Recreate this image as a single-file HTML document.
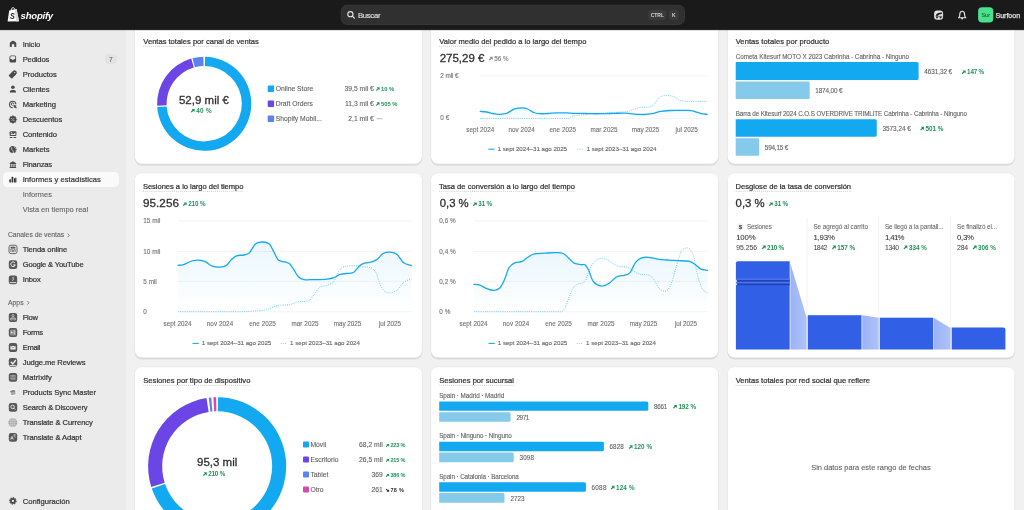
<!DOCTYPE html>
<html><head><meta charset="utf-8"><style>
html,body{margin:0;padding:0;width:1024px;height:510px;overflow:hidden;background:#f1f1f1;font-family:'Liberation Sans', sans-serif;}
#wrap{position:absolute;left:0;top:0;width:1024px;height:510px;will-change:transform;overflow:hidden;}
.r{position:absolute;}
.t{position:absolute;line-height:1;white-space:nowrap;}
svg{position:absolute;left:0;top:0;}
</style></head><body>
<div id="wrap">
<div class="r" style="left:0px;top:30px;width:125.5px;height:480px;background:#ebebeb;border-radius:0px;"></div><div class="r" style="left:3.2px;top:172.1px;width:116px;height:15px;background:#fafafa;border-radius:4.5px;"></div><div class="r" style="left:105.1px;top:54.2px;width:11.5px;height:10px;background:#e3e3e3;border-radius:4px;"></div>
<svg width="1024" height="510" viewBox="0 0 1024 510">
<rect x="134.60" y="11.00" width="287.60" height="154.80" rx="7.2" fill="rgba(0,0,0,0.08)"/><rect x="134.10" y="9.20" width="288.60" height="155.40" rx="7.8" fill="rgba(0,0,0,0.03)"/><rect x="134.90" y="10.00" width="287.00" height="153.80" rx="7" fill="#fff"/><rect x="430.80" y="11.00" width="287.60" height="154.80" rx="7.2" fill="rgba(0,0,0,0.08)"/><rect x="430.30" y="9.20" width="288.60" height="155.40" rx="7.8" fill="rgba(0,0,0,0.03)"/><rect x="431.10" y="10.00" width="287.00" height="153.80" rx="7" fill="#fff"/><rect x="727.30" y="11.00" width="287.60" height="154.80" rx="7.2" fill="rgba(0,0,0,0.08)"/><rect x="726.80" y="9.20" width="288.60" height="155.40" rx="7.8" fill="rgba(0,0,0,0.03)"/><rect x="727.60" y="10.00" width="287.00" height="153.80" rx="7" fill="#fff"/><rect x="134.60" y="174.30" width="287.60" height="185.30" rx="7.2" fill="rgba(0,0,0,0.08)"/><rect x="134.10" y="172.50" width="288.60" height="185.90" rx="7.8" fill="rgba(0,0,0,0.03)"/><rect x="134.90" y="173.30" width="287.00" height="184.30" rx="7" fill="#fff"/><rect x="430.80" y="174.30" width="287.60" height="185.30" rx="7.2" fill="rgba(0,0,0,0.08)"/><rect x="430.30" y="172.50" width="288.60" height="185.90" rx="7.8" fill="rgba(0,0,0,0.03)"/><rect x="431.10" y="173.30" width="287.00" height="184.30" rx="7" fill="#fff"/><rect x="727.30" y="174.30" width="287.60" height="185.30" rx="7.2" fill="rgba(0,0,0,0.08)"/><rect x="726.80" y="172.50" width="288.60" height="185.90" rx="7.8" fill="rgba(0,0,0,0.03)"/><rect x="727.60" y="173.30" width="287.00" height="184.30" rx="7" fill="#fff"/><rect x="134.60" y="368.20" width="287.60" height="173.80" rx="7.2" fill="rgba(0,0,0,0.08)"/><rect x="134.10" y="366.40" width="288.60" height="174.40" rx="7.8" fill="rgba(0,0,0,0.03)"/><rect x="134.90" y="367.20" width="287.00" height="172.80" rx="7" fill="#fff"/><rect x="430.80" y="368.20" width="287.60" height="173.80" rx="7.2" fill="rgba(0,0,0,0.08)"/><rect x="430.30" y="366.40" width="288.60" height="174.40" rx="7.8" fill="rgba(0,0,0,0.03)"/><rect x="431.10" y="367.20" width="287.00" height="172.80" rx="7" fill="#fff"/><rect x="727.30" y="368.20" width="287.60" height="173.80" rx="7.2" fill="rgba(0,0,0,0.08)"/><rect x="726.80" y="366.40" width="288.60" height="174.40" rx="7.8" fill="rgba(0,0,0,0.03)"/><rect x="727.60" y="367.20" width="287.00" height="172.80" rx="7" fill="#fff"/><rect x="0" y="28.8" width="1024" height="2.2" fill="rgba(0,0,0,0.12)"/><rect x="0" y="0" width="1024" height="29.6" fill="#1a1a1a"/><rect x="0" y="29" width="1024" height="0.7" fill="#0c0c0c"/><path d="M9.2,10.4 L16.6,9.0 L19.0,21.2 L7.6,21.6 Z" fill="#fff"/><path d="M11.2,10.2 C11.4,8.4 12.4,7.6 13.3,7.7 C14.2,7.8 14.6,8.6 14.7,9.7" stroke="#fff" stroke-width="1.0" fill="none"/><path d="M14.9,9.4 L16.6,9.0 L19.0,21.2 L15.8,21.5 Z" fill="#d8d8d8"/><rect x="341.2" y="5.2" width="343.3" height="19.3" rx="6" fill="#303030" stroke="#3d3d3d" stroke-width="0.7"/><circle cx="350.4" cy="14.2" r="2.6" stroke="#e3e3e3" stroke-width="1.1" fill="none"/><path d="M352.3,16.1 L354.4,18.2" stroke="#e3e3e3" stroke-width="1.2" stroke-linecap="round"/><rect x="648.5" y="10" width="17.7" height="10" rx="2.5" fill="#3a3a3a"/><rect x="669.1" y="10" width="9.7" height="10" rx="2.5" fill="#3a3a3a"/><rect x="934.1" y="10.5" width="9.0" height="9.2" rx="3.2" fill="#e3e3e3"/><path d="M935.6,15.6 Q937.0,12.4 942.0,12.6 L941.8,13.9 Q938.8,14.0 937.4,15.9 Z" fill="#1a1a1a"/><path d="M935.6,16.4 L942.4,16.4" stroke="#1a1a1a" stroke-width="0.6"/><ellipse cx="937.0" cy="17.6" rx="1.0" ry="0.8" fill="#1a1a1a"/><ellipse cx="940.6" cy="17.6" rx="1.0" ry="0.8" fill="#1a1a1a"/><path d="M962.2,11.3 C960.5,11.3 959.8,12.7 959.8,14.4 L959.6,16.2 L958.6,17.7 L965.8,17.7 L964.8,16.2 L964.6,14.4 C964.6,12.7 963.9,11.3 962.2,11.3 Z" stroke="#e3e3e3" stroke-width="1.1" fill="none" stroke-linejoin="round"/><circle cx="962.2" cy="18.5" r="0.95" fill="#e3e3e3"/><rect x="978.1" y="7.3" width="15.2" height="15.2" rx="4" fill="#4be08d"/><path d="M67.6,233.6 L69.4,235.4 L67.6,237.2" stroke="#616161" stroke-width="0.75" fill="none"/><path d="M27.3,301.0 L29.1,302.8 L27.3,304.6" stroke="#616161" stroke-width="0.75" fill="none"/><path d="M9.8,47.10 L9.8,43.20 Q9.8,42.60 10.3,42.20 L12.5,40.80 Q13.05,40.45 13.6,40.80 L15.8,42.20 Q16.3,42.60 16.3,43.20 L16.3,47.10 L14.3,47.10 L14.3,45.20 Q14.3,44.10 13.05,44.10 Q11.8,44.10 11.8,45.20 L11.8,47.10 Z" fill="#4a4a4a"/><rect x="9.5" y="55.40" width="6.6" height="7.0" rx="1.5" fill="#4a4a4a"/><path d="M10.4,56.30 L15.2,56.30 L15.2,59.00 L14.0,59.00 Q13.6,59.90 12.8,59.90 Q12.0,59.90 11.6,59.00 L10.4,59.00 Z" fill="#ebebeb"/><g transform="rotate(-45 13.1 74.20)"><path d="M9.0,71.90 L15.2,71.90 Q17.4,71.90 17.4,74.20 Q17.4,76.50 15.2,76.50 L9.0,76.50 Q8.8,74.20 9.0,71.90 Z" fill="#4a4a4a"/></g><circle cx="14.7" cy="72.60" r="0.65" fill="#ebebeb"/><circle cx="12.9" cy="87.30" r="1.8" fill="#4a4a4a"/><path d="M9.8,92.60 L9.8,91.90 C9.8,90.50 11.0,89.90 12.9,89.90 C14.8,89.90 16.0,90.50 16.0,91.90 L16.0,92.60 Z" fill="#4a4a4a"/><path d="M15.9,104.20 A3.2,3.2 0 1 0 12.6,107.60" stroke="#4a4a4a" stroke-width="1.1" fill="none"/><path d="M13.9,104.10 A1.3,1.3 0 1 0 12.5,105.40" stroke="#4a4a4a" stroke-width="1.0" fill="none"/><path d="M13.3,104.60 L17.0,105.90 L15.6,106.60 L16.9,107.90 L15.9,108.50 L14.8,107.30 L14.1,108.30 Z" fill="#4a4a4a"/><polygon points="12.90,115.60 14.12,116.54 15.66,116.74 15.86,118.28 16.80,119.50 15.86,120.72 15.66,122.26 14.12,122.46 12.90,123.40 11.68,122.46 10.14,122.26 9.94,120.72 9.00,119.50 9.94,118.28 10.14,116.74 11.68,116.54" fill="#4a4a4a" stroke="#4a4a4a" stroke-width="0.4" stroke-linejoin="round"/><path d="M11.7,120.80 L14.1,118.20" stroke="#ebebeb" stroke-width="0.6"/><circle cx="11.9" cy="118.60" r="0.5" fill="#ebebeb"/><circle cx="13.9" cy="120.40" r="0.5" fill="#ebebeb"/><rect x="9.6" y="131.20" width="6.8" height="4.8" rx="1.0" fill="#4a4a4a"/><path d="M10.5,134.80 L12.0,133.30 L13.3,134.30 L15.4,132.50 L15.4,135.10 L10.5,135.10 Z" fill="#ebebeb"/><rect x="10.7" y="132.10" width="1.1" height="1.0" fill="#ebebeb"/><rect x="9.6" y="137.10" width="3.0" height="0.8" rx="0.4" fill="#4a4a4a"/><rect x="13.4" y="137.10" width="3.0" height="0.8" rx="0.4" fill="#4a4a4a"/><circle cx="12.9" cy="149.50" r="3.6" fill="#4a4a4a"/><path d="M10.6,146.90 C12.6,147.90 11.0,149.30 12.6,150.30 C13.8,150.90 13.0,152.10 13.4,153.30" stroke="#ebebeb" stroke-width="0.8" fill="none"/><path d="M14.4,146.10 C14.0,147.70 15.4,148.90 16.8,148.30" stroke="#ebebeb" stroke-width="0.7" fill="none"/><path d="M15.0,150.70 L16.8,151.10" stroke="#ebebeb" stroke-width="0.6"/><path d="M9.6,163.30 L12.9,161.20 L16.2,163.30 L16.2,164.00 L9.6,164.00 Z" fill="#4a4a4a"/><rect x="10.1" y="164.40" width="1.3" height="2.4" fill="#4a4a4a"/><rect x="12.25" y="164.40" width="1.3" height="2.4" fill="#4a4a4a"/><rect x="14.4" y="164.40" width="1.3" height="2.4" fill="#4a4a4a"/><rect x="9.6" y="167.00" width="6.6" height="1.0" rx="0.3" fill="#4a4a4a"/><rect x="9.3" y="179.30" width="1.6" height="3.3" rx="0.5" fill="#303030"/><rect x="11.6" y="176.80" width="1.6" height="5.8" rx="0.5" fill="#303030"/><rect x="13.9" y="178.30" width="1.6" height="4.3" rx="0.5" fill="#303030"/><rect x="15.4" y="177.50" width="1.0" height="5.1" rx="0.4" fill="#303030"/><rect x="9.0" y="245.20" width="8.0" height="8.4" rx="2.0" fill="#e8e8e8" stroke="#5a5a5a" stroke-width="0.9"/><rect x="10.6" y="246.80" width="4.8" height="1.4" rx="0.3" fill="#5a5a5a"/><path d="M10.9,252.00 L10.9,248.90 L15.1,248.90 L15.1,252.00" stroke="#5a5a5a" stroke-width="0.8" fill="none"/><rect x="12.3" y="250.00" width="1.4" height="2.0" fill="#5a5a5a"/><rect x="8.8" y="260.20" width="8.4" height="8.8" rx="2.2" fill="#585858"/><path d="M15.0,263.00 A2.3,2.3 0 1 0 15.3,264.90 L13.2,264.90" stroke="#f2f2f2" stroke-width="1.0" fill="none"/><rect x="8.8" y="275.50" width="8.4" height="8.8" rx="2.2" fill="#585858"/><path d="M13.6,276.90 C11.8,277.90 14.4,279.10 12.4,280.70" stroke="#f2f2f2" stroke-width="0.9" fill="none"/><rect x="9.8" y="282.10" width="6.4" height="1.0" fill="#dcdcdc"/><rect x="8.8" y="313.10" width="8.4" height="8.8" rx="2.2" fill="#585858"/><circle cx="13.0" cy="315.50" r="1.0" stroke="#e8e8e8" stroke-width="0.6" fill="none"/><circle cx="11.3" cy="319.10" r="1.0" stroke="#e8e8e8" stroke-width="0.6" fill="none"/><circle cx="14.7" cy="319.10" r="1.0" stroke="#e8e8e8" stroke-width="0.6" fill="none"/><path d="M13.0,316.50 L13.0,317.70 M11.5,318.10 L14.5,318.10" stroke="#e8e8e8" stroke-width="0.6"/><rect x="8.8" y="328.10" width="8.4" height="8.8" rx="2.2" fill="#585858"/><rect x="10.0" y="329.50" width="6.0" height="6.0" rx="1.2" fill="#8c8c8c"/><path d="M10.8,331.30 L13.0,332.50 L10.8,333.70 Z" fill="#e0e0e0"/><rect x="13.8" y="330.30" width="0.8" height="4.4" fill="#e0e0e0"/><rect x="8.8" y="343.10" width="8.4" height="8.8" rx="2.2" fill="#585858"/><rect x="10.4" y="346.00" width="5.2" height="3.6" rx="0.5" fill="#f0f0f0"/><path d="M10.6,346.20 L13.0,347.90 L15.4,346.20" stroke="#585858" stroke-width="0.5" fill="none"/><rect x="8.8" y="358.00" width="8.4" height="8.8" rx="2.2" fill="#585858"/><path d="M10.8,361.80 L12.8,364.00 L15.8,360.00" stroke="#f0f0f0" stroke-width="1.3" fill="none"/><rect x="9.6" y="365.00" width="6.8" height="0.9" fill="#e8e8e8"/><rect x="8.8" y="373.00" width="8.4" height="8.8" rx="2.2" fill="#585858"/><rect x="10.3" y="375.10" width="5.4" height="4.6" rx="0.6" fill="#9a9a9a"/><rect x="10.3" y="376.80" width="5.4" height="0.6" fill="#585858"/><rect x="9.0" y="388.50" width="7.9" height="8.0" rx="2.0" fill="#f7f7f7" stroke="#dedede" stroke-width="0.4"/><g transform="rotate(-10 13 392.50)"><rect x="10.6" y="390.30" width="4.8" height="4.6" rx="0.7" fill="#a8a8a8"/><rect x="10.6" y="390.30" width="4.8" height="1.5" rx="0.5" fill="#7c7c7c"/></g><rect x="8.8" y="403.00" width="8.4" height="8.8" rx="2.2" fill="#585858"/><circle cx="12.6" cy="406.90" r="1.8" stroke="#f0f0f0" stroke-width="0.9" fill="none"/><path d="M13.9,408.20 L15.2,409.50" stroke="#f0f0f0" stroke-width="1.0"/><circle cx="12.8" cy="422.60" r="4.4" fill="#9e9e9e"/><path d="M8.4,422.60 L17.2,422.60 M12.8,418.20 L12.8,427.00 M9.0,420.40 L16.6,420.40 M9.0,424.80 L16.6,424.80" stroke="#e6e6e6" stroke-width="0.5"/><ellipse cx="12.8" cy="422.60" rx="2.1" ry="4.4" stroke="#e6e6e6" stroke-width="0.5" fill="none"/><rect x="8.8" y="433.00" width="8.4" height="8.8" rx="2.2" fill="#585858"/><path d="M10.6,439.60 L12.0,436.40 L13.4,439.60 M11.1,438.40 L12.9,438.40" stroke="#f0f0f0" stroke-width="0.7" fill="none"/><path d="M13.4,434.80 L15.8,434.80 M14.6,434.80 L14.6,435.60 M13.6,435.60 Q14.6,437.60 15.8,437.20" stroke="#f0f0f0" stroke-width="0.6" fill="none"/><polygon points="13.22,497.21 13.94,497.35 14.19,498.42 14.65,498.72 15.73,498.52 16.14,499.12 15.57,500.06 15.68,500.60 16.59,501.22 16.45,501.94 15.38,502.19 15.08,502.65 15.28,503.73 14.68,504.14 13.74,503.57 13.20,503.68 12.58,504.59 11.86,504.45 11.61,503.38 11.15,503.08 10.07,503.28 9.66,502.68 10.23,501.74 10.12,501.20 9.21,500.58 9.35,499.86 10.42,499.61 10.72,499.15 10.52,498.07 11.12,497.66 12.06,498.23 12.60,498.12" fill="#4a4a4a" stroke="#4a4a4a" stroke-width="0.3" stroke-linejoin="round"/><circle cx="12.9" cy="500.90" r="1.1" fill="#ebebeb"/><line x1="143.3" y1="46.3" x2="258.9" y2="46.3" stroke="#a6a6a6" stroke-width="0.6" stroke-dasharray="0.95 1.0"/><line x1="439.3" y1="46.3" x2="586.4" y2="46.3" stroke="#a6a6a6" stroke-width="0.6" stroke-dasharray="0.95 1.0"/><line x1="735.7" y1="46.3" x2="829.3000000000001" y2="46.3" stroke="#a6a6a6" stroke-width="0.6" stroke-dasharray="0.95 1.0"/><line x1="142.9" y1="191.3" x2="243.5" y2="191.3" stroke="#a6a6a6" stroke-width="0.6" stroke-dasharray="0.95 1.0"/><line x1="438.9" y1="191.3" x2="575.0" y2="191.3" stroke="#a6a6a6" stroke-width="0.6" stroke-dasharray="0.95 1.0"/><line x1="735.6" y1="191.3" x2="851.1" y2="191.3" stroke="#a6a6a6" stroke-width="0.6" stroke-dasharray="0.95 1.0"/><line x1="143.3" y1="385.3" x2="250.4" y2="385.3" stroke="#a6a6a6" stroke-width="0.6" stroke-dasharray="0.95 1.0"/><line x1="439.3" y1="385.3" x2="514.0" y2="385.3" stroke="#a6a6a6" stroke-width="0.6" stroke-dasharray="0.95 1.0"/><line x1="735.7" y1="385.3" x2="870.0" y2="385.3" stroke="#a6a6a6" stroke-width="0.6" stroke-dasharray="0.95 1.0"/><defs><linearGradient id="cg" x1="0" x2="1" y1="0" y2="0"><stop offset="0" stop-color="#9bb2f6"/><stop offset="1" stop-color="#afc2f8"/></linearGradient><linearGradient id="ga" x1="0" x2="0" y1="0" y2="1"><stop offset="0" stop-color="#13a9f1" stop-opacity="0.09"/><stop offset="1" stop-color="#13a9f1" stop-opacity="0.0"/></linearGradient></defs><path d="M205.02,56.66 A47.1,47.1 0 1 1 157.21,107.04 L166.64,106.38 A37.65,37.65 0 1 0 204.86,66.11 Z" fill="#13a9f1"/><path d="M157.14,105.72 A47.1,47.1 0 0 1 191.22,58.47 L193.82,67.56 A37.65,37.65 0 0 0 166.58,105.33 Z" fill="#6b45e6"/><path d="M192.49,58.13 A47.1,47.1 0 0 1 203.38,56.66 L203.54,66.11 A37.65,37.65 0 0 0 194.84,67.28 Z" fill="#5a83f0"/><path d="M191.60,108.90 L194.70,108.90 L194.70,112.00 Z" fill="#1f9157"/><path d="M191.60,111.80 L193.30,110.30" stroke="#1f9157" stroke-width="1.20" stroke-linecap="round"/><rect x="267.7" y="85.5" width="6.4" height="6.4" rx="1" fill="#13a9f1"/><path d="M376.57,87.35 L379.47,87.35 L379.47,90.25 Z" fill="#1f9157"/><path d="M376.57,90.06 L378.16,88.66" stroke="#1f9157" stroke-width="1.12" stroke-linecap="round"/><rect x="267.7" y="100.5" width="6.4" height="6.4" rx="1" fill="#6b45e6"/><path d="M376.57,102.35 L379.47,102.35 L379.47,105.25 Z" fill="#1f9157"/><path d="M376.57,105.06 L378.16,103.66" stroke="#1f9157" stroke-width="1.12" stroke-linecap="round"/><rect x="267.7" y="115.5" width="6.4" height="6.4" rx="1" fill="#5a83f0"/><line x1="376.6" y1="118.7" x2="382.6" y2="118.7" stroke="#8a8a8a" stroke-width="0.6"/><path d="M489.60,56.80 L492.70,56.80 L492.70,59.90 Z" fill="#8a8a8a"/><path d="M489.60,59.70 L491.30,58.20" stroke="#8a8a8a" stroke-width="1.20" stroke-linecap="round"/><line x1="480.3" y1="75.8" x2="707.3" y2="75.8" stroke="#ebebeb" stroke-width="0.6"/><line x1="480.3" y1="118.6" x2="707.3" y2="118.6" stroke="#ebebeb" stroke-width="0.6"/><path d="M480.30,111.40 C481.37,111.50 484.65,111.65 486.70,112.00 C488.75,112.35 490.65,113.12 492.60,113.50 C494.55,113.88 496.25,114.27 498.40,114.30 C500.55,114.33 503.53,114.18 505.50,113.70 C507.47,113.22 508.65,112.22 510.20,111.40 C511.75,110.58 512.85,109.38 514.80,108.80 C516.75,108.22 519.75,107.87 521.90,107.90 C524.05,107.93 525.75,108.23 527.70,109.00 C529.65,109.77 531.63,111.72 533.60,112.50 C535.57,113.28 537.15,113.53 539.50,113.70 C541.85,113.87 544.78,113.63 547.70,113.50 C550.62,113.37 553.88,113.00 557.00,112.90 C560.12,112.80 563.47,112.82 566.40,112.90 C569.33,112.98 571.28,113.30 574.60,113.40 C577.92,113.50 583.73,113.45 586.30,113.50 C588.87,113.55 587.43,113.67 590.00,113.70 C592.57,113.73 597.80,113.75 601.70,113.70 C605.60,113.65 609.48,113.50 613.40,113.40 C617.32,113.30 621.68,112.98 625.20,113.10 C628.72,113.22 631.38,113.87 634.50,114.10 C637.62,114.33 640.97,114.57 643.90,114.50 C646.83,114.43 649.37,114.22 652.10,113.70 C654.83,113.18 657.37,111.93 660.30,111.40 C663.23,110.87 666.57,110.67 669.70,110.50 C672.83,110.33 675.98,110.42 679.10,110.40 C682.22,110.38 685.87,110.23 688.40,110.40 C690.93,110.57 692.15,110.85 694.30,111.40 C696.45,111.95 699.13,113.22 701.30,113.70 C703.47,114.18 706.30,114.20 707.30,114.30 L707.30,118.6 L480.30,118.6 Z" fill="url(#ga)"/><path d="M480.30,118.40 C509.40,118.40 538.50,118.40 567.60,118.40 C569.17,118.40 570.73,116.91 572.30,116.40 C574.23,115.77 576.17,115.50 578.10,115.20 C580.83,114.77 583.57,114.97 586.30,114.50 C587.53,114.29 588.77,113.76 590.00,113.70 C593.90,113.50 597.80,113.60 601.70,113.40 C605.60,113.20 609.50,112.68 613.40,112.40 C617.33,112.12 621.27,112.17 625.20,111.70 C627.13,111.47 629.07,111.02 631.00,110.50 C633.73,109.77 636.47,107.95 639.20,107.60 C642.33,107.20 645.47,107.40 648.60,107.00 C650.17,106.80 651.73,106.06 653.30,104.90 C655.63,103.18 657.97,97.65 660.30,96.70 C662.27,95.90 664.23,95.50 666.20,95.50 C668.13,95.50 670.07,95.70 672.00,96.10 C675.13,96.75 678.27,100.34 681.40,100.80 C684.13,101.20 686.87,101.40 689.60,101.40 C695.50,101.40 701.40,101.40 707.30,101.40" stroke="#6cc5f2" stroke-width="0.95" stroke-dasharray="0.95 1.25" fill="none"/><path d="M480.30,111.40 C481.37,111.50 484.65,111.65 486.70,112.00 C488.75,112.35 490.65,113.12 492.60,113.50 C494.55,113.88 496.25,114.27 498.40,114.30 C500.55,114.33 503.53,114.18 505.50,113.70 C507.47,113.22 508.65,112.22 510.20,111.40 C511.75,110.58 512.85,109.38 514.80,108.80 C516.75,108.22 519.75,107.87 521.90,107.90 C524.05,107.93 525.75,108.23 527.70,109.00 C529.65,109.77 531.63,111.72 533.60,112.50 C535.57,113.28 537.15,113.53 539.50,113.70 C541.85,113.87 544.78,113.63 547.70,113.50 C550.62,113.37 553.88,113.00 557.00,112.90 C560.12,112.80 563.47,112.82 566.40,112.90 C569.33,112.98 571.28,113.30 574.60,113.40 C577.92,113.50 583.73,113.45 586.30,113.50 C588.87,113.55 587.43,113.67 590.00,113.70 C592.57,113.73 597.80,113.75 601.70,113.70 C605.60,113.65 609.48,113.50 613.40,113.40 C617.32,113.30 621.68,112.98 625.20,113.10 C628.72,113.22 631.38,113.87 634.50,114.10 C637.62,114.33 640.97,114.57 643.90,114.50 C646.83,114.43 649.37,114.22 652.10,113.70 C654.83,113.18 657.37,111.93 660.30,111.40 C663.23,110.87 666.57,110.67 669.70,110.50 C672.83,110.33 675.98,110.42 679.10,110.40 C682.22,110.38 685.87,110.23 688.40,110.40 C690.93,110.57 692.15,110.85 694.30,111.40 C696.45,111.95 699.13,113.22 701.30,113.70 C703.47,114.18 706.30,114.20 707.30,114.30" stroke="#13a9f1" stroke-width="1.3" fill="none" stroke-linecap="round"/><line x1="488.3" y1="149.2" x2="494.5" y2="149.2" stroke="#13a9f1" stroke-width="1.1"/><line x1="577.4" y1="149.2" x2="583.6" y2="149.2" stroke="#6cc5f2" stroke-width="0.95" stroke-dasharray="0.95 1.25"/><path d="M735.7,62.0 L917.00,62.0 Q918.60,62.0 918.60,63.60 L918.60,78.50 Q918.60,80.10 917.00,80.10 L735.7,80.10 Z" fill="#13a9f1"/><path d="M962.50,70.40 L965.60,70.40 L965.60,73.50 Z" fill="#1f9157"/><path d="M962.50,73.30 L964.20,71.80" stroke="#1f9157" stroke-width="1.20" stroke-linecap="round"/><path d="M735.7,81.4 L808.50,81.4 Q809.70,81.4 809.70,82.60 L809.70,97.80 Q809.70,99.00 808.50,99.00 L735.7,99.00 Z" fill="#85caea"/><path d="M735.7,119.2 L875.20,119.2 Q876.80,119.2 876.80,120.80 L876.80,135.10 Q876.80,136.70 875.20,136.70 L735.7,136.70 Z" fill="#13a9f1"/><path d="M920.90,126.80 L924.00,126.80 L924.00,129.90 Z" fill="#1f9157"/><path d="M920.90,129.70 L922.60,128.20" stroke="#1f9157" stroke-width="1.20" stroke-linecap="round"/><path d="M735.7,138.2 L758.00,138.2 Q759.20,138.2 759.20,139.40 L759.20,154.50 Q759.20,155.70 758.00,155.70 L735.7,155.70 Z" fill="#85caea"/><path d="M183.60,202.40 L186.70,202.40 L186.70,205.50 Z" fill="#1f9157"/><path d="M183.60,205.30 L185.30,203.80" stroke="#1f9157" stroke-width="1.20" stroke-linecap="round"/><line x1="178" y1="221.0" x2="411.7" y2="221.0" stroke="#ebebeb" stroke-width="0.6"/><line x1="178" y1="251.5" x2="411.7" y2="251.5" stroke="#ebebeb" stroke-width="0.6"/><line x1="178" y1="281.3" x2="411.7" y2="281.3" stroke="#ebebeb" stroke-width="0.6"/><line x1="178" y1="311.8" x2="411.7" y2="311.8" stroke="#ebebeb" stroke-width="0.6"/><path d="M178.00,265.30 C178.90,265.20 181.10,265.42 183.40,264.70 C185.70,263.98 189.17,261.77 191.80,261.00 C194.43,260.23 196.88,259.95 199.20,260.10 C201.52,260.25 203.52,260.88 205.70,261.90 C207.88,262.92 209.97,265.33 212.30,266.20 C214.63,267.07 217.38,267.20 219.70,267.10 C222.02,267.00 224.33,266.77 226.20,265.60 C228.07,264.43 229.18,261.73 230.90,260.10 C232.62,258.47 234.33,256.65 236.50,255.80 C238.67,254.95 241.73,255.53 243.90,255.00 C246.07,254.47 247.63,254.40 249.50,252.60 C251.37,250.80 253.08,245.97 255.10,244.20 C257.12,242.43 259.27,242.07 261.60,242.00 C263.93,241.93 267.07,242.18 269.10,243.80 C271.13,245.42 272.25,248.98 273.80,251.70 C275.35,254.42 276.55,258.40 278.40,260.10 C280.25,261.80 283.03,261.28 284.90,261.90 C286.77,262.52 288.13,262.55 289.60,263.80 C291.07,265.05 292.23,267.23 293.70,269.40 C295.17,271.57 296.68,275.10 298.40,276.80 C300.12,278.50 301.37,279.13 304.00,279.60 C306.63,280.07 310.32,279.68 314.20,279.60 C318.08,279.52 324.03,279.42 327.30,279.10 C330.57,278.78 331.78,278.45 333.80,277.70 C335.82,276.95 337.38,275.30 339.40,274.60 C341.42,273.90 343.58,273.85 345.90,273.50 C348.22,273.15 350.97,273.82 353.30,272.50 C355.63,271.18 358.03,267.15 359.90,265.60 C361.77,264.05 362.48,263.82 364.50,263.20 C366.52,262.58 369.82,262.58 372.00,261.90 C374.18,261.22 375.75,260.50 377.60,259.10 C379.45,257.70 380.93,254.65 383.10,253.50 C385.27,252.35 388.27,252.03 390.60,252.20 C392.93,252.37 394.93,252.73 397.10,254.50 C399.27,256.27 401.20,260.95 403.60,262.80 C406.00,264.65 410.18,265.13 411.50,265.60 L411.50,311.8 L178.00,311.8 Z" fill="url(#ga)"/><path d="M178.00,311.70 C199.97,311.70 221.93,311.70 243.90,311.70 C247.63,311.70 251.37,311.13 255.10,310.90 C258.20,310.71 261.30,310.73 264.40,310.40 C266.90,310.13 269.40,308.45 271.90,307.60 C274.37,306.76 276.83,305.56 279.30,305.30 C282.43,304.97 285.57,305.13 288.70,304.80 C291.63,304.49 294.57,302.53 297.50,302.00 C301.20,301.33 304.90,301.67 308.60,301.00 C310.47,300.66 312.33,296.82 314.20,294.50 C316.07,292.18 317.93,288.05 319.80,287.10 C322.30,285.83 324.80,286.26 327.30,285.20 C329.47,284.28 331.63,283.97 333.80,281.50 C335.67,279.37 337.53,272.65 339.40,270.30 C341.57,267.57 343.73,266.55 345.90,266.20 C348.37,265.80 350.83,265.60 353.30,265.60 C355.80,265.60 358.30,266.31 360.80,266.60 C363.90,266.96 367.00,266.90 370.10,267.50 C371.97,267.86 373.83,269.07 375.70,272.20 C377.57,275.33 379.43,284.12 381.30,287.10 C383.77,291.03 386.23,293.00 388.70,293.00 C391.20,293.00 393.70,292.27 396.20,290.80 C398.67,289.35 401.13,284.33 403.60,282.40 C406.23,280.34 408.87,279.77 411.50,279.20" stroke="#6cc5f2" stroke-width="0.95" stroke-dasharray="0.95 1.25" fill="none"/><path d="M178.00,265.30 C178.90,265.20 181.10,265.42 183.40,264.70 C185.70,263.98 189.17,261.77 191.80,261.00 C194.43,260.23 196.88,259.95 199.20,260.10 C201.52,260.25 203.52,260.88 205.70,261.90 C207.88,262.92 209.97,265.33 212.30,266.20 C214.63,267.07 217.38,267.20 219.70,267.10 C222.02,267.00 224.33,266.77 226.20,265.60 C228.07,264.43 229.18,261.73 230.90,260.10 C232.62,258.47 234.33,256.65 236.50,255.80 C238.67,254.95 241.73,255.53 243.90,255.00 C246.07,254.47 247.63,254.40 249.50,252.60 C251.37,250.80 253.08,245.97 255.10,244.20 C257.12,242.43 259.27,242.07 261.60,242.00 C263.93,241.93 267.07,242.18 269.10,243.80 C271.13,245.42 272.25,248.98 273.80,251.70 C275.35,254.42 276.55,258.40 278.40,260.10 C280.25,261.80 283.03,261.28 284.90,261.90 C286.77,262.52 288.13,262.55 289.60,263.80 C291.07,265.05 292.23,267.23 293.70,269.40 C295.17,271.57 296.68,275.10 298.40,276.80 C300.12,278.50 301.37,279.13 304.00,279.60 C306.63,280.07 310.32,279.68 314.20,279.60 C318.08,279.52 324.03,279.42 327.30,279.10 C330.57,278.78 331.78,278.45 333.80,277.70 C335.82,276.95 337.38,275.30 339.40,274.60 C341.42,273.90 343.58,273.85 345.90,273.50 C348.22,273.15 350.97,273.82 353.30,272.50 C355.63,271.18 358.03,267.15 359.90,265.60 C361.77,264.05 362.48,263.82 364.50,263.20 C366.52,262.58 369.82,262.58 372.00,261.90 C374.18,261.22 375.75,260.50 377.60,259.10 C379.45,257.70 380.93,254.65 383.10,253.50 C385.27,252.35 388.27,252.03 390.60,252.20 C392.93,252.37 394.93,252.73 397.10,254.50 C399.27,256.27 401.20,260.95 403.60,262.80 C406.00,264.65 410.18,265.13 411.50,265.60" stroke="#13a9f1" stroke-width="1.3" fill="none" stroke-linecap="round"/><line x1="192.5" y1="343.4" x2="198.7" y2="343.4" stroke="#13a9f1" stroke-width="1.1"/><line x1="280.8" y1="343.4" x2="287.0" y2="343.4" stroke="#6cc5f2" stroke-width="0.95" stroke-dasharray="0.95 1.25"/><path d="M473.70,202.40 L476.80,202.40 L476.80,205.50 Z" fill="#1f9157"/><path d="M473.70,205.30 L475.40,203.80" stroke="#1f9157" stroke-width="1.20" stroke-linecap="round"/><line x1="474" y1="221.0" x2="707.4" y2="221.0" stroke="#ebebeb" stroke-width="0.6"/><line x1="474" y1="251.5" x2="707.4" y2="251.5" stroke="#ebebeb" stroke-width="0.6"/><line x1="474" y1="281.3" x2="707.4" y2="281.3" stroke="#ebebeb" stroke-width="0.6"/><line x1="474" y1="311.8" x2="707.4" y2="311.8" stroke="#ebebeb" stroke-width="0.6"/><path d="M474.00,284.30 C474.88,284.38 477.17,284.08 479.30,284.80 C481.43,285.52 484.32,287.67 486.80,288.60 C489.28,289.53 492.03,290.50 494.20,290.40 C496.37,290.30 498.08,289.80 499.80,288.00 C501.52,286.20 502.95,283.02 504.50,279.60 C506.05,276.18 507.40,270.28 509.10,267.50 C510.80,264.72 512.52,263.92 514.70,262.90 C516.88,261.88 520.02,262.33 522.20,261.40 C524.38,260.47 525.78,258.55 527.80,257.30 C529.82,256.05 531.52,254.58 534.30,253.90 C537.08,253.22 540.93,253.42 544.50,253.20 C548.07,252.98 552.58,252.55 555.70,252.60 C558.82,252.65 561.02,252.57 563.20,253.50 C565.38,254.43 566.95,256.58 568.80,258.20 C570.65,259.82 572.13,262.12 574.30,263.20 C576.47,264.28 580.02,264.45 581.80,264.70 C583.58,264.95 583.85,263.77 585.00,264.70 C586.15,265.63 587.30,267.50 588.70,270.30 C590.10,273.10 591.22,278.87 593.40,281.50 C595.58,284.13 599.17,285.80 601.80,286.10 C604.43,286.40 606.72,284.85 609.20,283.30 C611.68,281.75 614.22,278.13 616.70,276.80 C619.18,275.47 621.93,275.92 624.10,275.30 C626.27,274.68 627.83,275.18 629.70,273.10 C631.57,271.02 633.43,265.28 635.30,262.80 C637.17,260.32 638.73,259.12 640.90,258.20 C643.07,257.28 645.50,257.15 648.30,257.30 C651.10,257.45 654.28,258.63 657.70,259.10 C661.12,259.57 665.40,259.85 668.80,260.10 C672.20,260.35 674.68,260.38 678.10,260.60 C681.52,260.82 686.50,260.78 689.30,261.40 C692.10,262.02 693.03,263.07 694.90,264.30 C696.77,265.53 698.42,267.80 700.50,268.80 C702.58,269.80 706.25,270.05 707.40,270.30 L707.40,311.8 L474.00,311.8 Z" fill="url(#ga)"/><path d="M474.00,311.70 C503.10,311.70 532.20,311.70 561.30,311.70 C562.53,311.70 563.77,309.78 565.00,307.60 C566.27,305.36 567.53,301.46 568.80,298.30 C570.03,295.22 571.27,291.19 572.50,288.90 C574.03,286.06 575.57,285.18 577.10,284.30 C579.30,283.03 581.50,283.67 583.70,282.40 C584.13,282.15 584.57,282.01 585.00,281.50 C586.23,280.06 587.47,274.97 588.70,272.20 C590.57,268.01 592.43,263.74 594.30,261.90 C596.80,259.43 599.30,258.20 601.80,258.20 C604.27,258.20 606.73,259.78 609.20,261.00 C611.70,262.24 614.20,264.74 616.70,265.60 C620.40,266.87 624.10,266.23 627.80,267.50 C630.30,268.36 632.80,270.97 635.30,272.20 C637.17,273.12 639.03,274.10 640.90,274.40 C643.37,274.80 645.83,274.60 648.30,275.00 C650.17,275.30 652.03,277.28 653.90,279.60 C655.77,281.92 657.63,287.37 659.50,288.90 C661.37,290.43 663.23,291.20 665.10,291.20 C666.97,291.20 668.83,289.20 670.70,285.20 C672.57,281.20 674.43,272.35 676.30,266.60 C678.17,260.85 680.03,252.57 681.90,250.70 C683.77,248.83 685.63,247.90 687.50,247.90 C689.33,247.90 691.17,250.10 693.00,254.50 C694.27,257.54 695.53,267.16 696.80,272.20 C698.67,279.63 700.53,286.06 702.40,288.90 C704.07,291.43 705.73,292.07 707.40,292.70" stroke="#6cc5f2" stroke-width="0.95" stroke-dasharray="0.95 1.25" fill="none"/><path d="M474.00,284.30 C474.88,284.38 477.17,284.08 479.30,284.80 C481.43,285.52 484.32,287.67 486.80,288.60 C489.28,289.53 492.03,290.50 494.20,290.40 C496.37,290.30 498.08,289.80 499.80,288.00 C501.52,286.20 502.95,283.02 504.50,279.60 C506.05,276.18 507.40,270.28 509.10,267.50 C510.80,264.72 512.52,263.92 514.70,262.90 C516.88,261.88 520.02,262.33 522.20,261.40 C524.38,260.47 525.78,258.55 527.80,257.30 C529.82,256.05 531.52,254.58 534.30,253.90 C537.08,253.22 540.93,253.42 544.50,253.20 C548.07,252.98 552.58,252.55 555.70,252.60 C558.82,252.65 561.02,252.57 563.20,253.50 C565.38,254.43 566.95,256.58 568.80,258.20 C570.65,259.82 572.13,262.12 574.30,263.20 C576.47,264.28 580.02,264.45 581.80,264.70 C583.58,264.95 583.85,263.77 585.00,264.70 C586.15,265.63 587.30,267.50 588.70,270.30 C590.10,273.10 591.22,278.87 593.40,281.50 C595.58,284.13 599.17,285.80 601.80,286.10 C604.43,286.40 606.72,284.85 609.20,283.30 C611.68,281.75 614.22,278.13 616.70,276.80 C619.18,275.47 621.93,275.92 624.10,275.30 C626.27,274.68 627.83,275.18 629.70,273.10 C631.57,271.02 633.43,265.28 635.30,262.80 C637.17,260.32 638.73,259.12 640.90,258.20 C643.07,257.28 645.50,257.15 648.30,257.30 C651.10,257.45 654.28,258.63 657.70,259.10 C661.12,259.57 665.40,259.85 668.80,260.10 C672.20,260.35 674.68,260.38 678.10,260.60 C681.52,260.82 686.50,260.78 689.30,261.40 C692.10,262.02 693.03,263.07 694.90,264.30 C696.77,265.53 698.42,267.80 700.50,268.80 C702.58,269.80 706.25,270.05 707.40,270.30" stroke="#13a9f1" stroke-width="1.3" fill="none" stroke-linecap="round"/><line x1="488.5" y1="343.4" x2="494.7" y2="343.4" stroke="#13a9f1" stroke-width="1.1"/><line x1="576.8" y1="343.4" x2="583.0" y2="343.4" stroke="#6cc5f2" stroke-width="0.95" stroke-dasharray="0.95 1.25"/><path d="M769.70,202.40 L772.80,202.40 L772.80,205.50 Z" fill="#1f9157"/><path d="M769.70,205.30 L771.40,203.80" stroke="#1f9157" stroke-width="1.20" stroke-linecap="round"/><line x1="807.1" y1="218" x2="807.1" y2="349.4" stroke="#ebebeb" stroke-width="0.6"/><line x1="878.7" y1="218" x2="878.7" y2="349.4" stroke="#ebebeb" stroke-width="0.6"/><line x1="950.5" y1="218" x2="950.5" y2="349.4" stroke="#ebebeb" stroke-width="0.6"/><path d="M762.50,245.60 L765.60,245.60 L765.60,248.70 Z" fill="#1f9157"/><path d="M762.50,248.50 L764.20,247.00" stroke="#1f9157" stroke-width="1.20" stroke-linecap="round"/><path d="M832.70,245.60 L835.80,245.60 L835.80,248.70 Z" fill="#1f9157"/><path d="M832.70,248.50 L834.40,247.00" stroke="#1f9157" stroke-width="1.20" stroke-linecap="round"/><path d="M904.30,245.60 L907.40,245.60 L907.40,248.70 Z" fill="#1f9157"/><path d="M904.30,248.50 L906.00,247.00" stroke="#1f9157" stroke-width="1.20" stroke-linecap="round"/><path d="M973.50,245.60 L976.60,245.60 L976.60,248.70 Z" fill="#1f9157"/><path d="M973.50,248.50 L975.20,247.00" stroke="#1f9157" stroke-width="1.20" stroke-linecap="round"/><circle cx="740.3" cy="227.0" r="3.7" fill="#f1f1f1"/><text x="740.3" y="229.0" font-size="6" font-family="Liberation Sans" font-weight="700" fill="#303030" text-anchor="middle">$</text><path d="M735.9,349.5 L735.9,263.3 Q735.9,261.3 737.9,261.3 L789.7,261.3 L789.7,349.5 Z" fill="#3160e6"/><rect x="735.9" y="278.5" width="53.8" height="1.6" fill="#4c74ef"/><rect x="735.9" y="280.1" width="53.8" height="1.7" fill="#1f40b6"/><rect x="735.9" y="281.8" width="53.8" height="1.8" fill="#4c74ef"/><rect x="735.9" y="283.6" width="53.8" height="1.6" fill="#1f40b6"/><path d="M735.4,279.6 L737.4,281.1 L735.4,282.6 Z" fill="#fff"/><path d="M735.4,282.8 L737.4,284.3 L735.4,285.8 Z" fill="#fff"/><path d="M790.4,263.6 L806.6,317.5 L806.6,349.5 L790.4,349.5 Z" fill="url(#cg)"/><rect x="807.8" y="315.2" width="53.7" height="34.30" fill="#3160e6"/><path d="M862.2,315.3 L878.7,317.8 L878.7,349.5 L862.2,349.5 Z" fill="url(#cg)"/><rect x="879.8" y="317.7" width="53.5" height="31.80" fill="#3160e6"/><path d="M934.0,318.1 L950.5,328.0 L950.5,349.5 L934.0,349.5 Z" fill="url(#cg)"/><path d="M951.7,349.5 L951.7,327.6 L1003.4,327.6 Q1005.4,327.6 1005.4,329.6 L1005.4,349.5 Z" fill="#3160e6"/><path d="M217.99,397.26 A69.05,69.05 0 1 1 151.78,488.55 L165.08,484.02 A55.0,55.0 0 1 0 217.82,411.30 Z" fill="#13a9f1"/><path d="M151.26,486.95 A69.05,69.05 0 0 1 206.47,398.08 L208.64,411.96 A55.0,55.0 0 0 0 164.67,482.75 Z" fill="#6b45e6"/><path d="M208.73,397.76 A69.05,69.05 0 0 1 211.25,397.50 L212.45,411.50 A55.0,55.0 0 0 0 210.45,411.71 Z" fill="#5a83f0"/><path d="M213.42,397.35 A69.05,69.05 0 0 1 216.19,397.26 L216.38,411.31 A55.0,55.0 0 0 0 214.18,411.38 Z" fill="#d54aa8"/><path d="M203.70,472.30 L206.80,472.30 L206.80,475.40 Z" fill="#1f9157"/><path d="M203.70,475.20 L205.40,473.70" stroke="#1f9157" stroke-width="1.20" stroke-linecap="round"/><rect x="303.0" y="441.4" width="6.0" height="6.0" rx="1" fill="#13a9f1"/><path d="M386.44,443.90 L389.14,443.90 L389.14,446.60 Z" fill="#1f9157"/><path d="M386.44,446.43 L387.92,445.12" stroke="#1f9157" stroke-width="1.05" stroke-linecap="round"/><rect x="303.0" y="456.4" width="6.0" height="6.0" rx="1" fill="#6b45e6"/><path d="M386.44,458.90 L389.14,458.90 L389.14,461.60 Z" fill="#1f9157"/><path d="M386.44,461.43 L387.92,460.12" stroke="#1f9157" stroke-width="1.05" stroke-linecap="round"/><rect x="303.0" y="471.4" width="6.0" height="6.0" rx="1" fill="#5a83f0"/><path d="M386.44,473.90 L389.14,473.90 L389.14,476.60 Z" fill="#1f9157"/><path d="M386.44,476.43 L387.92,475.12" stroke="#1f9157" stroke-width="1.05" stroke-linecap="round"/><rect x="303.0" y="486.4" width="6.0" height="6.0" rx="1" fill="#d54aa8"/><path d="M386.44,491.86 L389.14,491.86 L389.14,489.16 Z" fill="#303030"/><path d="M386.44,489.33 L387.92,490.64" stroke="#303030" stroke-width="1.05" stroke-linecap="round"/><path d="M439.2,401.4 L646.80,401.4 Q648.30,401.4 648.30,402.90 L648.30,409.30 Q648.30,410.80 646.80,410.80 L439.2,410.80 Z" fill="#13a9f1"/><path d="M673.80,404.90 L676.90,404.90 L676.90,408.00 Z" fill="#1f9157"/><path d="M673.80,407.80 L675.50,406.30" stroke="#1f9157" stroke-width="1.20" stroke-linecap="round"/><path d="M439.2,412.2 L509.10,412.2 Q510.60,412.2 510.60,413.70 L510.60,420.30 Q510.60,421.80 509.10,421.80 L439.2,421.80 Z" fill="#85caea"/><path d="M439.2,441.8 L602.40,441.8 Q603.90,441.8 603.90,443.30 L603.90,449.70 Q603.90,451.20 602.40,451.20 L439.2,451.20 Z" fill="#13a9f1"/><path d="M629.40,445.30 L632.50,445.30 L632.50,448.40 Z" fill="#1f9157"/><path d="M629.40,448.20 L631.10,446.70" stroke="#1f9157" stroke-width="1.20" stroke-linecap="round"/><path d="M439.2,452.6 L512.20,452.6 Q513.70,452.6 513.70,454.10 L513.70,460.70 Q513.70,462.20 512.20,462.20 L439.2,462.20 Z" fill="#85caea"/><path d="M439.2,482.3 L584.40,482.3 Q585.90,482.3 585.90,483.80 L585.90,490.20 Q585.90,491.70 584.40,491.70 L439.2,491.70 Z" fill="#13a9f1"/><path d="M611.40,485.80 L614.50,485.80 L614.50,488.90 Z" fill="#1f9157"/><path d="M611.40,488.70 L613.10,487.20" stroke="#1f9157" stroke-width="1.20" stroke-linecap="round"/><path d="M439.2,493.1 L503.00,493.1 Q504.50,493.1 504.50,494.60 L504.50,501.20 Q504.50,502.70 503.00,502.70 L439.2,502.70 Z" fill="#85caea"/>
</svg>
<div class="t" style="left:9.60px;top:12.00px;font-size:8.6px;font-weight:700;color:#1a1a1a;font-style:italic;transform:scaleX(0.82);transform-origin:0 0;-webkit-text-stroke:0.01px #1a1a1a;">S</div><div class="t" style="left:20.60px;top:11.00px;font-size:9.6px;font-weight:700;color:#fff;font-style:italic;letter-spacing:-0.25px;">shopify</div><div class="t" style="left:357.90px;top:12.00px;font-size:7.7px;font-weight:400;color:#e3e3e3;-webkit-text-stroke:0.12px #e3e3e3;letter-spacing:-0.273px;">Buscar</div><div class="t" style="left:650.63px;top:13.00px;font-size:5.0px;font-weight:700;color:#cfcfcf;">CTRL</div><div class="t" style="left:672.09px;top:13.00px;font-size:5.0px;font-weight:700;color:#cfcfcf;">K</div><div class="t" style="left:981.42px;top:13.00px;font-size:5.5px;font-weight:400;color:#1c5c38;-webkit-text-stroke:0.1px #1c5c38;">Sur</div><div class="t" style="left:995.60px;top:13.00px;font-size:6.97px;font-weight:400;color:#e3e3e3;-webkit-text-stroke:0.25px #e3e3e3;">Surfoon</div><div class="t" style="left:22.70px;top:41.00px;font-size:7.6px;font-weight:400;color:#303030;-webkit-text-stroke:0.2px #303030;letter-spacing:-0.028px;">Inicio</div><div class="t" style="left:22.70px;top:56.00px;font-size:7.6px;font-weight:400;color:#303030;-webkit-text-stroke:0.2px #303030;letter-spacing:-0.144px;">Pedidos</div><div class="t" style="left:22.70px;top:71.00px;font-size:7.6px;font-weight:400;color:#303030;-webkit-text-stroke:0.2px #303030;letter-spacing:-0.015px;">Productos</div><div class="t" style="left:22.70px;top:86.00px;font-size:7.6px;font-weight:400;color:#303030;-webkit-text-stroke:0.2px #303030;letter-spacing:-0.094px;">Clientes</div><div class="t" style="left:22.70px;top:101.00px;font-size:7.6px;font-weight:400;color:#303030;-webkit-text-stroke:0.2px #303030;letter-spacing:-0.021px;">Marketing</div><div class="t" style="left:22.70px;top:116.00px;font-size:7.6px;font-weight:400;color:#303030;-webkit-text-stroke:0.2px #303030;letter-spacing:-0.059px;">Descuentos</div><div class="t" style="left:22.70px;top:131.00px;font-size:7.6px;font-weight:400;color:#303030;-webkit-text-stroke:0.2px #303030;letter-spacing:-0.056px;">Contenido</div><div class="t" style="left:22.70px;top:146.00px;font-size:7.6px;font-weight:400;color:#303030;-webkit-text-stroke:0.2px #303030;letter-spacing:-0.038px;">Markets</div><div class="t" style="left:22.70px;top:161.00px;font-size:7.6px;font-weight:400;color:#303030;-webkit-text-stroke:0.2px #303030;letter-spacing:-0.205px;">Finanzas</div><div class="t" style="left:22.70px;top:176.00px;font-size:7.6px;font-weight:400;color:#303030;-webkit-text-stroke:0.2px #303030;letter-spacing:0.022px;">Informes y estadísticas</div><div class="t" style="left:22.70px;top:191.00px;font-size:7.4px;font-weight:400;color:#616161;-webkit-text-stroke:0.1px #616161;letter-spacing:0.073px;">Informes</div><div class="t" style="left:22.70px;top:206.00px;font-size:7.4px;font-weight:400;color:#616161;-webkit-text-stroke:0.1px #616161;letter-spacing:0.012px;">Vista en tiempo real</div><div class="t" style="left:7.90px;top:232.00px;font-size:6.8px;font-weight:400;color:#616161;-webkit-text-stroke:0.1px #616161;letter-spacing:-0.008px;">Canales de ventas</div><div class="t" style="left:22.70px;top:246.00px;font-size:7.6px;font-weight:400;color:#303030;-webkit-text-stroke:0.2px #303030;letter-spacing:-0.063px;">Tienda online</div><div class="t" style="left:22.70px;top:261.00px;font-size:7.6px;font-weight:400;color:#303030;-webkit-text-stroke:0.2px #303030;letter-spacing:-0.169px;">Google &amp; YouTube</div><div class="t" style="left:22.70px;top:276.00px;font-size:7.6px;font-weight:400;color:#303030;-webkit-text-stroke:0.2px #303030;letter-spacing:-0.148px;">Inbox</div><div class="t" style="left:7.90px;top:300.00px;font-size:6.8px;font-weight:400;color:#616161;-webkit-text-stroke:0.1px #616161;letter-spacing:0.067px;">Apps</div><div class="t" style="left:22.70px;top:314.00px;font-size:7.6px;font-weight:400;color:#303030;-webkit-text-stroke:0.2px #303030;letter-spacing:-0.249px;">Flow</div><div class="t" style="left:22.70px;top:329.00px;font-size:7.6px;font-weight:400;color:#303030;-webkit-text-stroke:0.2px #303030;letter-spacing:-0.283px;">Forms</div><div class="t" style="left:22.70px;top:344.00px;font-size:7.6px;font-weight:400;color:#303030;-webkit-text-stroke:0.2px #303030;letter-spacing:-0.351px;">Email</div><div class="t" style="left:22.70px;top:359.00px;font-size:7.6px;font-weight:400;color:#303030;-webkit-text-stroke:0.2px #303030;letter-spacing:-0.094px;">Judge.me Reviews</div><div class="t" style="left:22.70px;top:374.00px;font-size:7.6px;font-weight:400;color:#303030;-webkit-text-stroke:0.2px #303030;letter-spacing:0.114px;">Matrixify</div><div class="t" style="left:22.70px;top:389.00px;font-size:7.6px;font-weight:400;color:#303030;-webkit-text-stroke:0.2px #303030;letter-spacing:-0.049px;">Products Sync Master</div><div class="t" style="left:22.70px;top:404.00px;font-size:7.6px;font-weight:400;color:#303030;-webkit-text-stroke:0.2px #303030;letter-spacing:-0.102px;">Search &amp; Discovery</div><div class="t" style="left:22.70px;top:419.00px;font-size:7.6px;font-weight:400;color:#303030;-webkit-text-stroke:0.2px #303030;letter-spacing:-0.070px;">Translate &amp; Currency</div><div class="t" style="left:22.70px;top:434.00px;font-size:7.6px;font-weight:400;color:#303030;-webkit-text-stroke:0.2px #303030;letter-spacing:-0.071px;">Translate &amp; Adapt</div><div class="t" style="left:22.70px;top:498.00px;font-size:7.6px;font-weight:400;color:#303030;-webkit-text-stroke:0.2px #303030;letter-spacing:0.009px;">Configuración</div><div class="t" style="left:109.01px;top:57.00px;font-size:6.6px;font-weight:400;color:#616161;-webkit-text-stroke:0.1px #616161;">7</div><div class="t" style="left:143.30px;top:38.00px;font-size:7.58px;font-weight:400;color:#303030;-webkit-text-stroke:0.22px #303030;letter-spacing:-0.009px;">Ventas totales por canal de ventas</div><div class="t" style="left:439.30px;top:38.00px;font-size:7.58px;font-weight:400;color:#303030;-webkit-text-stroke:0.22px #303030;letter-spacing:-0.006px;">Valor medio del pedido a lo largo del tiempo</div><div class="t" style="left:735.70px;top:38.00px;font-size:7.58px;font-weight:400;color:#303030;-webkit-text-stroke:0.22px #303030;letter-spacing:0.051px;">Ventas totales por producto</div><div class="t" style="left:142.90px;top:183.00px;font-size:7.58px;font-weight:400;color:#303030;-webkit-text-stroke:0.22px #303030;letter-spacing:-0.033px;">Sesiones a lo largo del tiempo</div><div class="t" style="left:438.90px;top:183.00px;font-size:7.58px;font-weight:400;color:#303030;-webkit-text-stroke:0.22px #303030;letter-spacing:0.011px;">Tasa de conversión a lo largo del tiempo</div><div class="t" style="left:735.60px;top:183.00px;font-size:7.58px;font-weight:400;color:#303030;-webkit-text-stroke:0.22px #303030;letter-spacing:-0.012px;">Desglose de la tasa de conversión</div><div class="t" style="left:143.30px;top:377.00px;font-size:7.58px;font-weight:400;color:#303030;-webkit-text-stroke:0.22px #303030;letter-spacing:0.016px;">Sesiones por tipo de dispositivo</div><div class="t" style="left:439.30px;top:377.00px;font-size:7.58px;font-weight:400;color:#303030;-webkit-text-stroke:0.22px #303030;letter-spacing:0.006px;">Sesiones por sucursal</div><div class="t" style="left:735.70px;top:377.00px;font-size:7.58px;font-weight:400;color:#303030;-webkit-text-stroke:0.22px #303030;letter-spacing:0.018px;">Ventas totales por red social que refiere</div><div class="t" style="left:178.90px;top:95.00px;font-size:11.5px;font-weight:400;color:#303030;-webkit-text-stroke:0.3px #303030;letter-spacing:0.016px;">52,9 mil €</div><div class="t" style="left:196.20px;top:108.00px;font-size:6.3px;font-weight:700;color:#1f9157;letter-spacing:0.347px;">40 %</div><div class="t" style="left:275.70px;top:86.00px;font-size:6.75px;font-weight:400;color:#616161;-webkit-text-stroke:0.1px #616161;">Online Store</div><div class="t" style="left:344.54px;top:86.00px;font-size:6.75px;font-weight:400;color:#616161;-webkit-text-stroke:0.1px #616161;">39,5 mil €</div><div class="t" style="left:380.88px;top:87.00px;font-size:5.9px;font-weight:700;color:#1f9157;">10 %</div><div class="t" style="left:275.70px;top:101.00px;font-size:6.75px;font-weight:400;color:#616161;-webkit-text-stroke:0.1px #616161;">Draft Orders</div><div class="t" style="left:345.04px;top:101.00px;font-size:6.75px;font-weight:400;color:#616161;-webkit-text-stroke:0.1px #616161;">11,3 mil €</div><div class="t" style="left:380.88px;top:102.00px;font-size:5.9px;font-weight:700;color:#1f9157;">505 %</div><div class="t" style="left:275.70px;top:116.00px;font-size:6.75px;font-weight:400;color:#616161;-webkit-text-stroke:0.1px #616161;">Shopify Mobil...</div><div class="t" style="left:348.29px;top:116.00px;font-size:6.75px;font-weight:400;color:#616161;-webkit-text-stroke:0.1px #616161;">2,1 mil €</div><div class="t" style="left:439.70px;top:53.00px;font-size:11.48px;font-weight:400;color:#303030;-webkit-text-stroke:0.3px #303030;letter-spacing:0.002px;">275,29 €</div><div class="t" style="left:494.20px;top:56.00px;font-size:6.3px;font-weight:700;color:#8a8a8a;letter-spacing:0.047px;">56 %</div><div class="t" style="left:440.30px;top:73.00px;font-size:6.4px;font-weight:400;color:#707070;-webkit-text-stroke:0.1px #707070;letter-spacing:-0.108px;">2 mil €</div><div class="t" style="left:440.30px;top:115.00px;font-size:6.4px;font-weight:400;color:#707070;-webkit-text-stroke:0.1px #707070;">0 €</div><div class="t" style="left:466.20px;top:127.00px;font-size:6.3px;font-weight:400;color:#707070;-webkit-text-stroke:0.1px #707070;letter-spacing:0.041px;">sept 2024</div><div class="t" style="left:508.40px;top:127.00px;font-size:6.3px;font-weight:400;color:#707070;-webkit-text-stroke:0.1px #707070;letter-spacing:0.068px;">nov 2024</div><div class="t" style="left:549.50px;top:127.00px;font-size:6.3px;font-weight:400;color:#707070;-webkit-text-stroke:0.1px #707070;letter-spacing:0.046px;">ene 2025</div><div class="t" style="left:590.40px;top:127.00px;font-size:6.3px;font-weight:400;color:#707070;-webkit-text-stroke:0.1px #707070;letter-spacing:0.084px;">mar 2025</div><div class="t" style="left:631.70px;top:127.00px;font-size:6.3px;font-weight:400;color:#707070;-webkit-text-stroke:0.1px #707070;letter-spacing:-0.010px;">may 2025</div><div class="t" style="left:675.50px;top:127.00px;font-size:6.3px;font-weight:400;color:#707070;-webkit-text-stroke:0.1px #707070;letter-spacing:0.019px;">jul 2025</div><div class="t" style="left:497.60px;top:146.00px;font-size:6.2px;font-weight:400;color:#616161;-webkit-text-stroke:0.1px #616161;letter-spacing:-0.033px;">1 sept 2024–31 ago 2025</div><div class="t" style="left:586.70px;top:146.00px;font-size:6.2px;font-weight:400;color:#616161;-webkit-text-stroke:0.1px #616161;letter-spacing:-0.015px;">1 sept 2023–31 ago 2024</div><div class="t" style="left:735.70px;top:54.00px;font-size:6.3px;font-weight:400;color:#616161;-webkit-text-stroke:0.1px #616161;letter-spacing:-0.028px;">Cometa Kitesurf MOTO X 2023 Cabrinha - Cabrinha - Ninguno</div><div class="t" style="left:924.30px;top:69.00px;font-size:6.4px;font-weight:400;color:#616161;-webkit-text-stroke:0.1px #616161;letter-spacing:-0.072px;">4631,32 €</div><div class="t" style="left:967.10px;top:69.00px;font-size:6.3px;font-weight:700;color:#1f9157;letter-spacing:-0.191px;">147 %</div><div class="t" style="left:815.30px;top:88.00px;font-size:6.4px;font-weight:400;color:#616161;-webkit-text-stroke:0.1px #616161;letter-spacing:-0.147px;">1874,00 €</div><div class="t" style="left:735.70px;top:111.00px;font-size:6.3px;font-weight:400;color:#616161;-webkit-text-stroke:0.1px #616161;letter-spacing:-0.097px;">Barra de Kitesurf 2024 C.O.S OVERDRIVE TRIMLITE Cabrinha - Cabrinha - Ninguno</div><div class="t" style="left:882.40px;top:126.00px;font-size:6.4px;font-weight:400;color:#616161;-webkit-text-stroke:0.1px #616161;letter-spacing:0.003px;">3573,24 €</div><div class="t" style="left:925.50px;top:126.00px;font-size:6.3px;font-weight:700;color:#1f9157;letter-spacing:-0.016px;">501 %</div><div class="t" style="left:764.80px;top:145.00px;font-size:6.4px;font-weight:400;color:#616161;-webkit-text-stroke:0.1px #616161;letter-spacing:-0.202px;">594,15 €</div><div class="t" style="left:142.90px;top:197.00px;font-size:11.7px;font-weight:400;color:#303030;-webkit-text-stroke:0.3px #303030;letter-spacing:0.063px;">95.256</div><div class="t" style="left:188.20px;top:201.00px;font-size:6.3px;font-weight:700;color:#1f9157;letter-spacing:-0.091px;">210 %</div><div class="t" style="left:143.30px;top:218.00px;font-size:6.4px;font-weight:400;color:#707070;-webkit-text-stroke:0.1px #707070;">15 mil</div><div class="t" style="left:143.30px;top:249.00px;font-size:6.4px;font-weight:400;color:#707070;-webkit-text-stroke:0.1px #707070;">10 mil</div><div class="t" style="left:143.30px;top:279.00px;font-size:6.4px;font-weight:400;color:#707070;-webkit-text-stroke:0.1px #707070;">5 mil</div><div class="t" style="left:143.30px;top:309.00px;font-size:6.4px;font-weight:400;color:#707070;-webkit-text-stroke:0.1px #707070;">0</div><div class="t" style="left:163.60px;top:321.00px;font-size:6.3px;font-weight:400;color:#707070;-webkit-text-stroke:0.1px #707070;letter-spacing:0.041px;">sept 2024</div><div class="t" style="left:206.80px;top:321.00px;font-size:6.3px;font-weight:400;color:#707070;-webkit-text-stroke:0.1px #707070;letter-spacing:0.068px;">nov 2024</div><div class="t" style="left:249.20px;top:321.00px;font-size:6.3px;font-weight:400;color:#707070;-webkit-text-stroke:0.1px #707070;letter-spacing:0.046px;">ene 2025</div><div class="t" style="left:291.40px;top:321.00px;font-size:6.3px;font-weight:400;color:#707070;-webkit-text-stroke:0.1px #707070;letter-spacing:0.084px;">mar 2025</div><div class="t" style="left:333.70px;top:321.00px;font-size:6.3px;font-weight:400;color:#707070;-webkit-text-stroke:0.1px #707070;letter-spacing:-0.010px;">may 2025</div><div class="t" style="left:378.90px;top:321.00px;font-size:6.3px;font-weight:400;color:#707070;-webkit-text-stroke:0.1px #707070;letter-spacing:0.019px;">jul 2025</div><div class="t" style="left:201.80px;top:340.00px;font-size:6.2px;font-weight:400;color:#616161;-webkit-text-stroke:0.1px #616161;letter-spacing:-0.033px;">1 sept 2024–31 ago 2025</div><div class="t" style="left:290.10px;top:340.00px;font-size:6.2px;font-weight:400;color:#616161;-webkit-text-stroke:0.1px #616161;letter-spacing:-0.015px;">1 sept 2023–31 ago 2024</div><div class="t" style="left:439.70px;top:198.00px;font-size:11.34px;font-weight:400;color:#303030;-webkit-text-stroke:0.3px #303030;letter-spacing:0.001px;">0,3 %</div><div class="t" style="left:478.30px;top:201.00px;font-size:6.3px;font-weight:700;color:#1f9157;letter-spacing:-0.153px;">31 %</div><div class="t" style="left:439.30px;top:218.00px;font-size:6.4px;font-weight:400;color:#707070;-webkit-text-stroke:0.1px #707070;">0,6 %</div><div class="t" style="left:439.30px;top:249.00px;font-size:6.4px;font-weight:400;color:#707070;-webkit-text-stroke:0.1px #707070;">0,4 %</div><div class="t" style="left:439.30px;top:279.00px;font-size:6.4px;font-weight:400;color:#707070;-webkit-text-stroke:0.1px #707070;">0,2 %</div><div class="t" style="left:439.30px;top:309.00px;font-size:6.4px;font-weight:400;color:#707070;-webkit-text-stroke:0.1px #707070;">0 %</div><div class="t" style="left:459.60px;top:321.00px;font-size:6.3px;font-weight:400;color:#707070;-webkit-text-stroke:0.1px #707070;letter-spacing:0.041px;">sept 2024</div><div class="t" style="left:502.80px;top:321.00px;font-size:6.3px;font-weight:400;color:#707070;-webkit-text-stroke:0.1px #707070;letter-spacing:0.068px;">nov 2024</div><div class="t" style="left:545.20px;top:321.00px;font-size:6.3px;font-weight:400;color:#707070;-webkit-text-stroke:0.1px #707070;letter-spacing:0.046px;">ene 2025</div><div class="t" style="left:587.40px;top:321.00px;font-size:6.3px;font-weight:400;color:#707070;-webkit-text-stroke:0.1px #707070;letter-spacing:0.084px;">mar 2025</div><div class="t" style="left:629.70px;top:321.00px;font-size:6.3px;font-weight:400;color:#707070;-webkit-text-stroke:0.1px #707070;letter-spacing:-0.010px;">may 2025</div><div class="t" style="left:674.90px;top:321.00px;font-size:6.3px;font-weight:400;color:#707070;-webkit-text-stroke:0.1px #707070;letter-spacing:0.019px;">jul 2025</div><div class="t" style="left:497.80px;top:340.00px;font-size:6.2px;font-weight:400;color:#616161;-webkit-text-stroke:0.1px #616161;letter-spacing:-0.033px;">1 sept 2024–31 ago 2025</div><div class="t" style="left:586.10px;top:340.00px;font-size:6.2px;font-weight:400;color:#616161;-webkit-text-stroke:0.1px #616161;letter-spacing:-0.015px;">1 sept 2023–31 ago 2024</div><div class="t" style="left:735.60px;top:198.00px;font-size:11.34px;font-weight:400;color:#303030;-webkit-text-stroke:0.3px #303030;letter-spacing:0.001px;">0,3 %</div><div class="t" style="left:774.30px;top:201.00px;font-size:6.3px;font-weight:700;color:#1f9157;letter-spacing:-0.153px;">31 %</div><div class="t" style="left:746.90px;top:224.00px;font-size:6.3px;font-weight:400;color:#616161;-webkit-text-stroke:0.05px #616161;letter-spacing:-0.131px;">Sesiones</div><div class="t" style="left:736.20px;top:234.00px;font-size:7.8px;font-weight:400;color:#303030;-webkit-text-stroke:0.05px #303030;letter-spacing:-0.150px;">100%</div><div class="t" style="left:736.20px;top:245.00px;font-size:6.9px;font-weight:400;color:#4a4a4a;-webkit-text-stroke:0.05px #4a4a4a;letter-spacing:-0.021px;">95.256</div><div class="t" style="left:767.10px;top:245.00px;font-size:6.3px;font-weight:700;color:#1f9157;letter-spacing:-0.216px;">210 %</div><div class="t" style="left:813.40px;top:224.00px;font-size:6.3px;font-weight:400;color:#616161;-webkit-text-stroke:0.05px #616161;letter-spacing:-0.020px;">Se agregó al carrito</div><div class="t" style="left:813.40px;top:234.00px;font-size:7.8px;font-weight:400;color:#303030;-webkit-text-stroke:0.05px #303030;letter-spacing:-0.154px;">1,93%</div><div class="t" style="left:813.40px;top:245.00px;font-size:6.9px;font-weight:400;color:#4a4a4a;-webkit-text-stroke:0.05px #4a4a4a;letter-spacing:-0.450px;">1842</div><div class="t" style="left:837.30px;top:245.00px;font-size:6.3px;font-weight:700;color:#1f9157;">157 %</div><div class="t" style="left:885.00px;top:224.00px;font-size:6.3px;font-weight:400;color:#616161;-webkit-text-stroke:0.05px #616161;letter-spacing:-0.076px;">Se llegó a la pantall...</div><div class="t" style="left:885.00px;top:234.00px;font-size:7.8px;font-weight:400;color:#303030;-webkit-text-stroke:0.05px #303030;letter-spacing:-0.654px;">1,41%</div><div class="t" style="left:885.00px;top:245.00px;font-size:6.9px;font-weight:400;color:#4a4a4a;-webkit-text-stroke:0.05px #4a4a4a;letter-spacing:-0.450px;">1340</div><div class="t" style="left:908.90px;top:245.00px;font-size:6.3px;font-weight:700;color:#1f9157;">334 %</div><div class="t" style="left:957.00px;top:224.00px;font-size:6.3px;font-weight:400;color:#616161;-webkit-text-stroke:0.05px #616161;letter-spacing:-0.061px;">Se finalizó el...</div><div class="t" style="left:957.00px;top:234.00px;font-size:7.8px;font-weight:400;color:#303030;-webkit-text-stroke:0.05px #303030;letter-spacing:-0.260px;">0,3%</div><div class="t" style="left:957.00px;top:245.00px;font-size:6.9px;font-weight:400;color:#4a4a4a;-webkit-text-stroke:0.05px #4a4a4a;letter-spacing:-0.156px;">284</div><div class="t" style="left:978.10px;top:245.00px;font-size:6.3px;font-weight:700;color:#1f9157;">306 %</div><div class="t" style="left:197.10px;top:457.00px;font-size:11.48px;font-weight:400;color:#303030;-webkit-text-stroke:0.3px #303030;letter-spacing:0.000px;">95,3 mil</div><div class="t" style="left:208.30px;top:471.00px;font-size:6.3px;font-weight:700;color:#1f9157;letter-spacing:-0.216px;">210 %</div><div class="t" style="left:310.40px;top:442.00px;font-size:6.75px;font-weight:400;color:#616161;-webkit-text-stroke:0.1px #616161;">Móvil</div><div class="t" style="left:359.06px;top:442.00px;font-size:6.75px;font-weight:400;color:#616161;-webkit-text-stroke:0.1px #616161;">68,2 mil</div><div class="t" style="left:390.45px;top:443.00px;font-size:5.5px;font-weight:700;color:#1f9157;letter-spacing:-0.162px;">223 %</div><div class="t" style="left:310.40px;top:457.00px;font-size:6.75px;font-weight:400;color:#616161;-webkit-text-stroke:0.1px #616161;">Escritorio</div><div class="t" style="left:359.06px;top:457.00px;font-size:6.75px;font-weight:400;color:#616161;-webkit-text-stroke:0.1px #616161;">26,5 mil</div><div class="t" style="left:390.45px;top:458.00px;font-size:5.5px;font-weight:700;color:#1f9157;letter-spacing:-0.162px;">215 %</div><div class="t" style="left:310.40px;top:472.00px;font-size:6.75px;font-weight:400;color:#616161;-webkit-text-stroke:0.1px #616161;">Tablet</div><div class="t" style="left:371.44px;top:472.00px;font-size:6.75px;font-weight:400;color:#616161;-webkit-text-stroke:0.1px #616161;">369</div><div class="t" style="left:390.45px;top:473.00px;font-size:5.5px;font-weight:700;color:#1f9157;letter-spacing:-0.162px;">386 %</div><div class="t" style="left:310.40px;top:487.00px;font-size:6.75px;font-weight:400;color:#616161;-webkit-text-stroke:0.1px #616161;">Otro</div><div class="t" style="left:371.44px;top:487.00px;font-size:6.75px;font-weight:400;color:#616161;-webkit-text-stroke:0.1px #616161;">261</div><div class="t" style="left:390.45px;top:488.00px;font-size:5.5px;font-weight:700;color:#303030;letter-spacing:0.337px;">78 %</div><div class="t" style="left:439.20px;top:393.00px;font-size:6.3px;font-weight:400;color:#616161;-webkit-text-stroke:0.1px #616161;letter-spacing:-0.037px;">Spain · Madrid · Madrid</div><div class="t" style="left:654.00px;top:404.00px;font-size:6.3px;font-weight:400;color:#616161;-webkit-text-stroke:0.1px #616161;letter-spacing:-0.272px;">8661</div><div class="t" style="left:678.40px;top:404.00px;font-size:6.3px;font-weight:700;color:#1f9157;letter-spacing:-0.066px;">192 %</div><div class="t" style="left:516.50px;top:415.00px;font-size:6.3px;font-weight:400;color:#616161;-webkit-text-stroke:0.1px #616161;letter-spacing:-0.438px;">2971</div><div class="t" style="left:439.20px;top:433.00px;font-size:6.3px;font-weight:400;color:#616161;-webkit-text-stroke:0.1px #616161;letter-spacing:-0.064px;">Spain · Ninguno · Ninguno</div><div class="t" style="left:609.60px;top:444.00px;font-size:6.3px;font-weight:400;color:#616161;-webkit-text-stroke:0.1px #616161;letter-spacing:0.028px;">6828</div><div class="t" style="left:634.00px;top:444.00px;font-size:6.3px;font-weight:700;color:#1f9157;letter-spacing:0.034px;">120 %</div><div class="t" style="left:519.60px;top:455.00px;font-size:6.3px;font-weight:400;color:#616161;-webkit-text-stroke:0.1px #616161;letter-spacing:0.128px;">3098</div><div class="t" style="left:439.20px;top:474.00px;font-size:6.3px;font-weight:400;color:#616161;-webkit-text-stroke:0.1px #616161;letter-spacing:-0.093px;">Spain · Catalonia · Barcelona</div><div class="t" style="left:591.60px;top:485.00px;font-size:6.3px;font-weight:400;color:#616161;-webkit-text-stroke:0.1px #616161;letter-spacing:0.262px;">6088</div><div class="t" style="left:616.00px;top:485.00px;font-size:6.3px;font-weight:700;color:#1f9157;letter-spacing:0.184px;">124 %</div><div class="t" style="left:510.40px;top:496.00px;font-size:6.3px;font-weight:400;color:#616161;-webkit-text-stroke:0.1px #616161;letter-spacing:0.028px;">2723</div><div class="t" style="left:811.20px;top:464.00px;font-size:7.4px;font-weight:400;color:#616161;-webkit-text-stroke:0.1px #616161;letter-spacing:0.021px;">Sin datos para este rango de fechas</div>
</div>
</body></html>
